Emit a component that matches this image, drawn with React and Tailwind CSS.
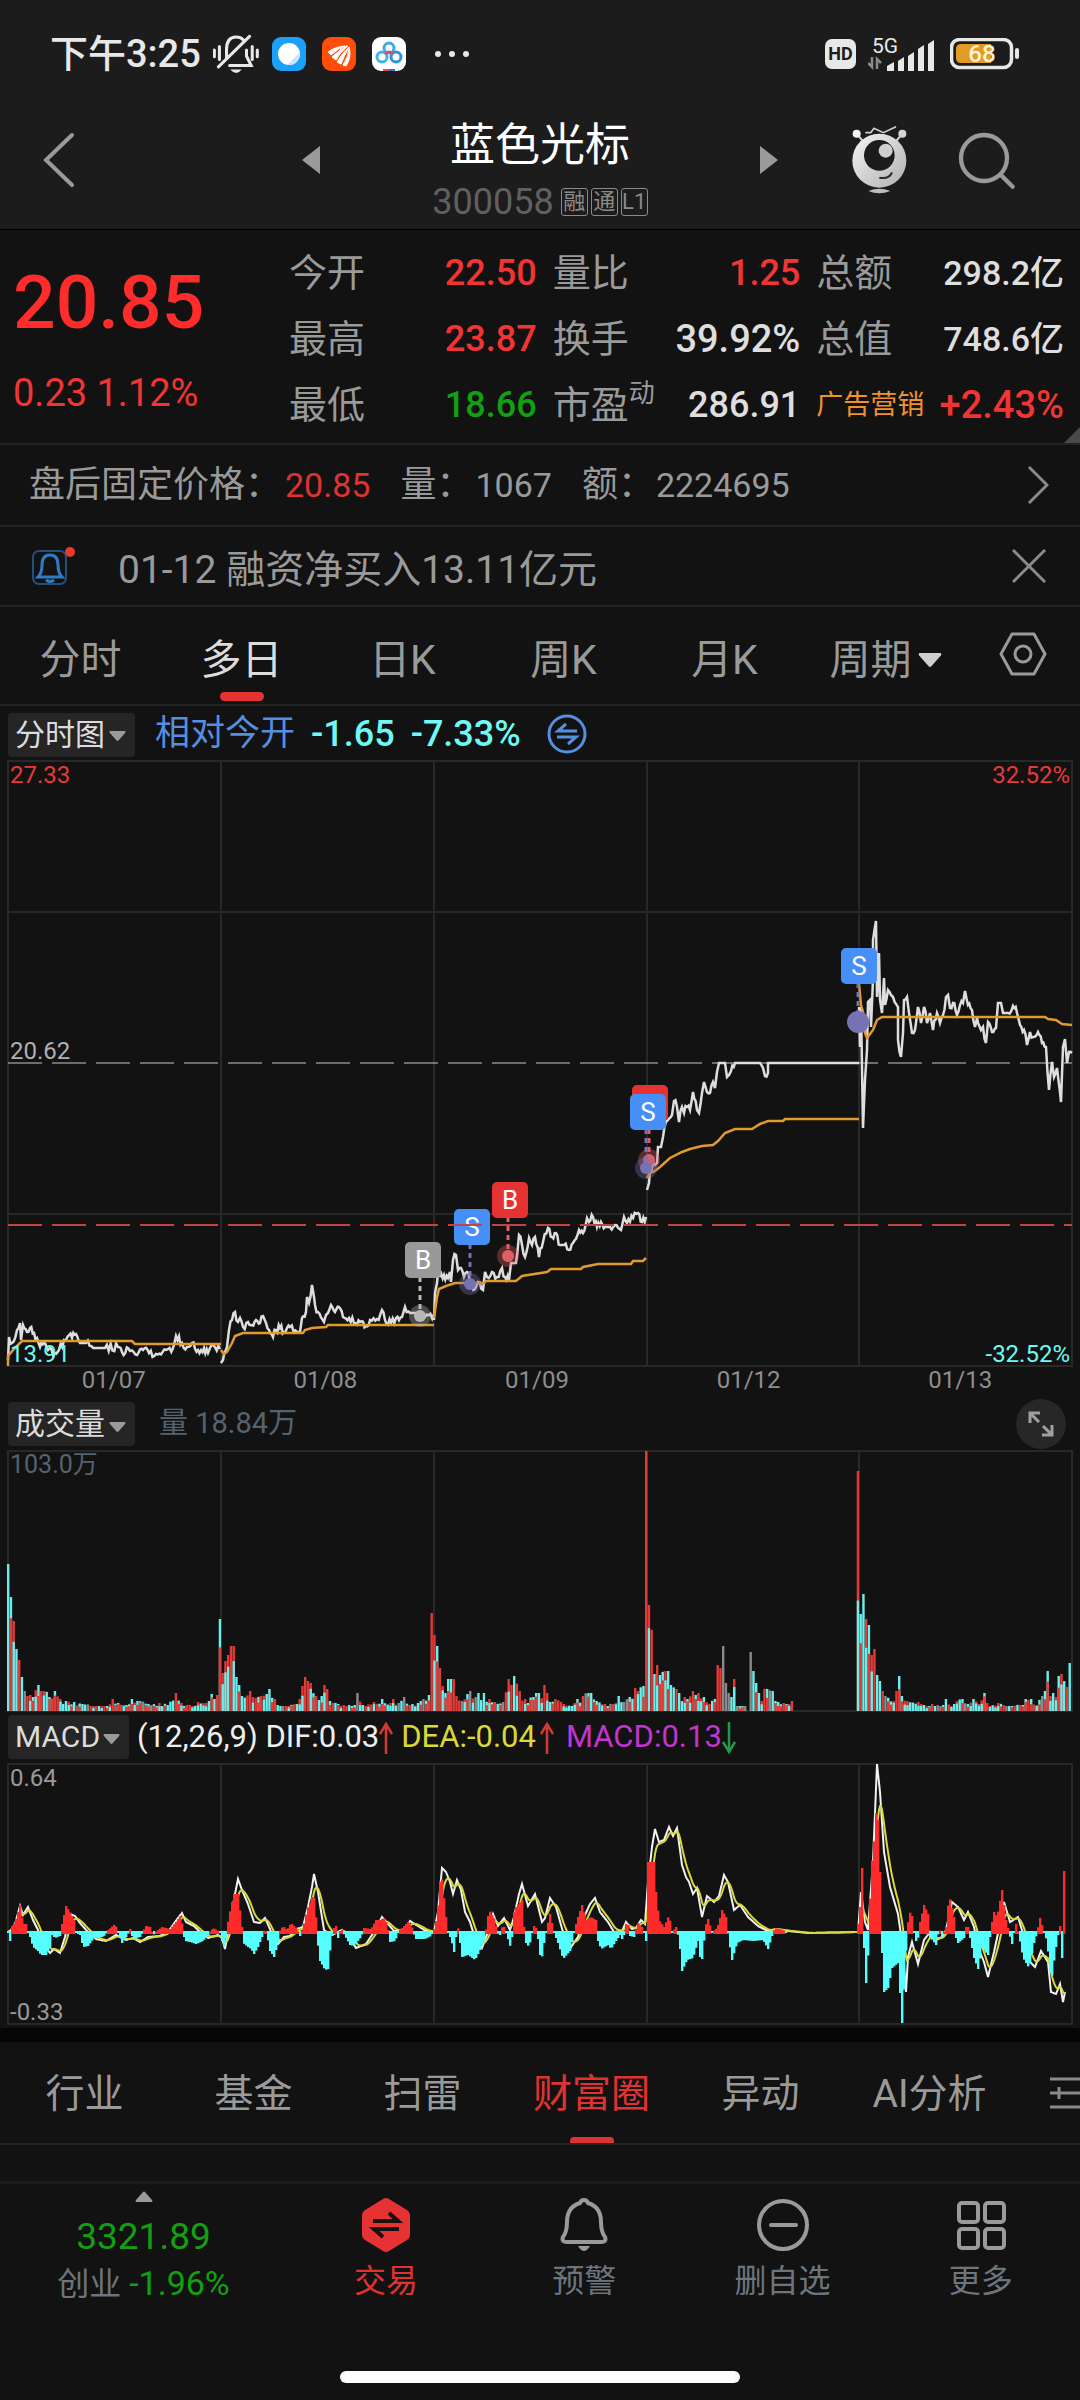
import React, {useState} from 'react';

const DAYS = ['01/07', '01/08', '01/09', '01/12', '01/13'];

const RED = '#e53935';

// each string is one trading day: "x,y x,y ..." in chart units
const PRICE_LINES = [
    '0,599 1,576 4,582 9,569 12,562 13,579 15,564 19,571 22,567 26,572 29,577 32,586 36,582 40,589 47,592 51,589 56,579 61,574 64,577 68,573 72,582 78,582 87,587 97,587 110,586 114,591 122,590 129,594 135,589 141,592 148,593 158,589 165,587 168,575 174,582 179,586 184,582 190,589 196,587 200,592 202,587 212,588',
    '213,602 215,599 219,586 221,569 224,559 227,551 230,561 232,557 235,566 240,561 244,564 248,559 252,562 255,555 258,562 261,569 265,576 268,569 272,567 276,571 282,566 289,571 292,571 294,557 298,551 299,536 301,542 304,524 306,536 307,544 310,551 316,561 318,554 320,552 323,544 327,551 331,546 335,556 341,557 346,562 352,561 358,565 362,559 369,558 374,549 377,559 383,562 388,557 394,556 397,546 402,552 409,552 417,556 426,553',
    '426,559 427,532 429,522 431,501 432,516 436,514 440,517 442,511 443,521 445,499 448,494 450,509 453,507 456,516 459,511 462,521 467,528 470,521 475,529 477,511 479,516 484,511 489,516 494,507 497,516 501,519 503,502 508,502 511,474 514,484 517,496 521,477 524,484 527,476 531,496 535,481 540,467 544,476 548,472 552,484 556,484 561,489 565,482 571,469 575,472 579,457 581,461 585,456 589,466 593,461 597,466 602,466 607,464 613,469 616,456 619,462 625,457 630,452 634,461 638,456',
    '639,429 641,422 642,409 645,402 647,404 649,402 650,386 653,386 655,376 658,361 660,359 664,354 666,340 669,346 671,361 674,346 676,352 679,346 682,349 685,331 689,349 691,352 694,332 696,321 699,331 702,332 705,321 707,327 709,311 711,302 717,302 719,316 721,314 723,310 727,302 752,302 755,307 757,315 760,312 760,302 851,302',
    '851,246 852,286 853,246 855,367 857,319 859,289 860,241 862,239 863,266 865,219 865,179 868,160 869,236 871,192 872,239 874,252 876,217 877,244 880,229 883,234 885,236 890,246 890,279 893,296 895,272 896,239 899,236 901,252 904,272 907,269 910,246 913,262 916,246 919,262 922,252 925,269 929,252 932,262 935,254 938,236 940,234 942,247 945,242 949,254 952,244 955,242 957,230 960,244 964,249 967,266 969,257 973,269 975,266 978,282 980,261 984,271 988,267 990,242 993,242 995,252 1000,252 1005,245 1009,252 1012,264 1016,269 1019,284 1022,271 1025,276 1030,271 1034,282 1038,286 1041,329 1044,301 1046,316 1049,307 1053,341 1055,286 1057,278 1059,302 1061,291 1064,292',
];

const AVG_LINES = [
    '0,605 0,595 6,588 12,582 14,580 124,580 127,583 213,583',
    '213,589 216,593 219,591 224,582 227,575 235,572 295,572 297,569 304,567 318,566 320,564 426,564',
    '426,557 429,536 431,528 438,525 447,522 476,522 478,520 508,520 514,515 539,511 543,508 573,508 575,506 590,503 623,503 625,500 635,500 638,497',
    '639,417 642,412 647,410 652,406 662,397 674,391 682,388 694,385 705,384 710,380 717,372 727,368 744,368 752,363 760,360 775,360 777,358 851,358',
    '851,222 853,244 855,251 857,272 859,277 865,269 869,259 874,256 1037,256 1040,258 1048,259 1054,263 1064,264',
];

// "x,height[,colour]" with r = up, c = down, g = flat
const VOLUME = '0,147,c 3,114,c 5,90,r 8,62,c 11,51,r 14,34,c 16,20 20,15 25,14 30,26,c 33,20 36,20 42,14 47,20,c 52,12 58,10 65,9 75,7 85,5 100,5 104,12,r 110,8 118,6 125,12,c 130,10 140,7 150,8 160,6 168,18,r 172,8 180,6 190,9 200,10 204,17 208,16 212,92,c 215,38,r 217,50,r 219,56,r 223,65,r 226,65,r 228,34,c 231,26,c 235,15 242,20 246,14 252,15 258,17 262,22,c 266,12 270,6 280,5 288,7 293,25,r 297,34,r 300,30,r 303,28,r 307,15 315,14 317,26,r 320,22,r 322,10 330,7 340,6 347,6 350,18,g 354,6 366,9 374,12 382,8 386,12 390,8 397,14 402,6 410,8 415,12 420,16 423,22 424,98,r 426,76,r 429,65,c 432,43,r 435,25,r 438,18 440,32,c 443,32,c 446,32,r 449,15 455,10 462,20 468,14 471,18 476,18 480,12 488,9 495,9 500,32,r 503,26,r 507,35,c 511,20 516,12 525,14 528,18 532,18 536,26,r 539,18 542,9 548,12 556,7 566,8 570,12 576,15 580,18,c 584,18,c 588,10 596,7 606,7 611,15 616,9 622,14 627,23 631,20 635,25 638,260,r 641,106,r 643,81,r 646,37,c 649,46,r 652,36 656,36 658,40 661,40,c 663,26 668,22 672,18 676,14 680,12 685,20,r 690,18 695,14 700,7 706,12 710,46,r 712,43,r 715,65,g 718,28,g 720,18 724,14 726,32,r 728,4,g 738,4,g 740,0 742,0 743,59,g 745,40,c 748,28,c 751,18 755,15 757,22,r 759,22 764,20 766,10 775,8 783,10 785,0 848,0 850,240,r 852,97,c 855,117,c 858,92,r 861,86,c 863,56,r 866,62,r 869,36 872,30 875,20 878,15 885,10 889,20 891,35,c 893,15 900,10 910,9 915,6 925,7 935,6 938,12 945,7 954,12 960,7 965,12 972,7 976,18,c 980,8 990,8 1000,5 1012,6 1018,12 1023,12 1028,6 1033,15 1037,20 1039,40,c 1042,15 1045,18 1048,14 1050,35,c 1053,37,r 1056,30,c 1058,24,r 1061,48,c';

const HISTOGRAM = '0,0 2,-8 3,5 7,10 12,27 15,8 18,8 20,0 22,-4 25,-14 30,-18 33,-22 38,-22 42,-14 44,-2 47,-5 52,-3 54,8 58,26 63,18 67,10 68,0 72,-2 75,-14 80,-13 86,-5 95,-4 100,2 107,8 110,0 114,-10 118,-4 122,3 125,-6 132,-4 138,6 142,5 145,-2 150,2 154,5 162,3 168,10 173,17 175,0 177,-8 182,-9 188,-11 195,-8 200,-2 205,4 212,0 214,-8 217,-16 219,5 223,26 226,38 230,38 234,5 235,-10 240,-14 243,-16 246,-21 250,-14 254,-4 257,4 259,-2 262,-18 266,-24 270,-10 271,0 275,6 279,2 283,9 288,4 292,-3 295,4 299,22 304,35 307,34 309,-5 312,-28 317,-37 320,-36 323,-8 325,3 328,6 330,-5 333,4 337,-3 342,-12 346,-13 353,-4 356,4 363,3 368,12 372,12 377,14 380,2 382,-9 387,-8 390,0 400,10 405,3 407,-6 417,-6 423,-3 426,3 429,15 433,62 438,15 440,0 443,-6 446,-19 448,-4 449,10 451,-3 454,-24 460,-22 467,-27 473,-15 477,-5 479,10 481,22 487,12 489,0 492,-2 495,8 499,-3 503,-16 506,20 508,25 514,32 516,5 518,-10 521,-14 524,0 527,9 530,-6 533,-30 536,-10 539,5 542,18 546,0 550,-10 555,-26 562,-18 566,0 569,12 574,27 578,12 583,15 588,12 590,-8 593,-16 600,-12 603,-16 608,-8 612,-2 615,-8 617,4 619,12 622,-3 626,-4 630,9 635,4 638,-8 639,5 640,70 646,70 648,40 651,12 656,5 661,17 664,0 668,5 671,-5 674,-38 679,-27 685,-25 690,-8 693,-32 695,-20 697,5 700,13 704,0 709,4 711,10 714,22 718,15 721,-8 724,-27 729,-10 735,-7 745,-8 755,-7 760,-16 764,-3 767,4 775,2 778,0 849,0 852,25 854,64 855,20 857,-50 859,-50 861,5 863,62 867,100 869,138 872,60 874,-20 875,-60 880,-55 884,-35 890,-30 894,-90 897,-40 899,5 903,24 906,0 909,-12 912,10 916,27 920,18 922,-4 928,-12 931,4 934,-4 938,5 941,37 946,15 948,-5 950,-10 956,-5 959,10 962,-5 966,-25 970,-36 974,-15 980,-22 983,5 986,20 989,15 994,42 998,12 1001,0 1004,-11 1006,0 1008,8 1011,-3 1015,-25 1021,-35 1026,-10 1029,0 1032,14 1036,0 1039,-8 1043,-50 1047,-20 1050,-2 1052,6 1054,-25 1055,61 1057,61 1058,0';

const DIF = '0,0 3,2 7,8 12,26 15,17 20,25 25,12 30,2 34,-10 42,-21 46,-17 52,-21 57,-5 62,18 67,16 72,9 80,0 88,-7 98,-9 108,-3 118,-8 125,-6 132,-10 140,-5 152,-4 160,0 170,14 174,19 178,10 186,6 192,0 200,-6 210,-3 214,-6 217,-17 222,10 227,38 230,53 234,42 240,28 246,10 252,9 257,14 262,3 266,-8 270,-12 276,-5 282,-4 288,3 295,5 300,25 304,45 306,58 310,40 316,2 324,-3 334,2 340,-3 348,-16 358,-12 366,0 374,15 380,8 386,1 396,1 402,11 410,6 418,1 426,0 430,20 434,64 438,60 442,50 445,38 449,52 453,42 457,20 462,10 467,-6 474,-16 480,0 485,18 490,6 496,14 502,2 506,15 511,38 514,48 520,26 527,38 532,18 534,10 537,14 542,34 548,25 555,0 563,-15 570,-5 576,15 582,28 587,34 592,20 600,10 606,0 614,1 618,10 624,3 628,4 633,12 637,8 640,50 644,85 647,103 651,90 656,92 661,105 665,96 669,104 674,67 678,55 681,50 685,38 689,44 694,15 699,36 706,30 711,36 716,57 720,50 726,22 732,27 740,15 750,6 760,1 768,3 780,1 800,-1 850,0 853,40 857,10 860,2 865,70 869,168 872,140 876,80 882,45 890,18 894,-10 898,-60 900,-25 904,-10 910,-32 916,-8 922,0 928,-8 934,-5 938,2 944,30 950,25 956,12 960,20 966,5 970,-15 976,-30 980,-45 986,-20 992,8 996,30 1002,10 1010,15 1016,-5 1022,-30 1027,-35 1033,-19 1040,-30 1043,-60 1048,-62 1052,-52 1055,-70 1057,-60';

const parse = (text) => text.split(' ').map((item) => {
    const [x, y, color] = item.split(',');
    return {x: Number(x), y: Number(y), color};
});

const noise = (n) => {
    const v = Math.sin(n * 127.1 + 11.7) * 43758.5453;
    return v - Math.floor(v);
};

const valueAt = (points, x) => {
    for (let i = 1; i < points.length; i++) {
        if (x <= points[i].x) {
            const a = points[i - 1];
            const b = points[i];
            return b.x === a.x ? b.y : a.y + (b.y - a.y) * (x - a.x) / (b.x - a.x);
        }
    }
    return points[points.length - 1].y;
};

// minute-level jitter between the stored ticks
const jitter = (text) => {
    const points = parse(text);
    const out = [];
    points.forEach((p, i) => {
        out.push(`${p.x},${p.y}`);
        const next = points[i + 1];
        if (next && next.x - p.x > 2 && next.x - p.x < 20 && p.y !== next.y) {
            const count = Math.floor((next.x - p.x) / 2);
            for (let k = 1; k <= count; k++) {
                const t = k / (count + 1);
                const y = p.y + (next.y - p.y) * t + (noise(p.x + k * 3) - 0.5) * 8;
                out.push(`${(p.x + (next.x - p.x) * t).toFixed(1)},${y.toFixed(1)}`);
            }
        }
    });
    return out.join(' ');
};

const buildVolume = () => {
    const keys = parse(VOLUME);
    const fills = {r: RED, c: '#6af0ec', g: '#8a8a8a'};
    const bars = [];
    for (let i = 0; i < 387; i++) {
        const x = i * 2.75;
        const near = keys.filter((k) => Math.abs(k.x - x) <= 1.4).sort((a, b) => b.y - a.y)[0];
        let h = near ? near.y : valueAt(keys, x) * (0.6 + noise(i) * 0.5);
        if (h < 1) continue;
        h = Math.max(h, 5);
        const n = noise(i * 1.7 + 3);
        const color = (near && near.color) || (n < 0.42 ? 'r' : n < 0.9 ? 'c' : 'g');
        bars.push({x, h, fill: fills[color]});
        if (noise(i + 40) > 0.45 && color !== 'g') {
            const k = h > 200 ? 0.46 : 0.55 + noise(i + 9) * 0.3;
            bars.push({x, h: h * k, fill: fills[color === 'r' ? 'c' : 'r']});
        }
    }
    return bars;
};

const buildMacd = () => {
    const dif = parse(DIF);
    const hist = parse(HISTOGRAM);
    const white = [];
    const yellow = [];
    const bars = [];
    let dea = 0;
    for (let x = 0; x <= 1057; x++) {
        const v = valueAt(dif, x);
        dea = dea + (v - dea) * 0.22;
        white.push(`${x},${(168 - v).toFixed(1)}`);
        yellow.push(`${x},${(168 - dea).toFixed(1)}`);
        if (x % 2 === 0 && (x < 780 || x > 848)) bars.push({x, v: valueAt(hist, x)});
    }
    return {white: white.join(' '), yellow: yellow.join(' '), bars};
};

const volumeBars = buildVolume();
const macd = buildMacd();

function Grid({height, rows = []}) {
    return (
        <g stroke="#282828" strokeWidth="2" fill="none">
            <rect x="0" y="0" width="1064" height={height}/>
            {[213, 426, 639, 851].map((x) => <line key={x} x1={x} x2={x} y1="0" y2={height}/>)}
            {rows.map((y) => <line key={y} x1="0" x2="1064" y1={y} y2={y}/>)}
        </g>
    );
}

function Flag({x, y, letter, color, dot, dotColor, solid}) {
    return (
        <g>
            <line x1={dot[0]} x2={dot[0]} y1={y + 35} y2={dot[1]} stroke={dotColor} strokeWidth="3" strokeDasharray="5 4"/>
            <circle cx={dot[0]} cy={dot[1]} r="11" fill={dotColor} opacity={solid ? 1 : 0.35}/>
            <circle cx={dot[0]} cy={dot[1]} r="6" fill={dotColor}/>
            <rect x={x} y={y} width="36" height="36" rx="5" fill={color}/>
            {letter && <text x={x + 18} y={y + 27} textAnchor="middle" fontSize="26" fill="#fff">{letter}</text>}
        </g>
    );
}

function PriceChart() {
    return (
        <svg viewBox="0 0 1064 605" className="block w-full overflow-visible">
            <Grid height="605" rows={[151, 453]}/>
            <line x1="0" x2="1064" y1="302" y2="302" stroke="#c8c8c8" strokeWidth="1" strokeDasharray="34 10"/>
            {PRICE_LINES.map((line) => (
                <polyline key={line} points={jitter(line)} fill="none" stroke="#dedede" strokeWidth="2.500"/>
            ))}
            {AVG_LINES.map((line) => (
                <polyline key={line} points={line} fill="none" stroke="#e09a2f" strokeWidth="2.500"/>
            ))}
            <Flag x={397} y={481} letter="B" color="#999" dot={[412, 555]} dotColor="#b8b8b8"/>
            <Flag x={446} y={448} letter="S" color="#458ff7" dot={[462, 523]} dotColor="#7672b4"/>
            <Flag x={484} y={421} letter="B" color="#e63232" dot={[500, 495]} dotColor="#e05f63"/>
            <Flag x={624} y={324} color="#e63232" dot={[641, 399]} dotColor="#e05f63"/>
            <Flag x={622} y={333} letter="S" color="#458ff7" dot={[638, 407]} dotColor="#7672b4"/>
            <Flag x={833} y={187} letter="S" color="#458ff7" dot={[850, 261]} dotColor="#7672b4" solid/>
            <line x1="0" x2="1064" y1="464" y2="464" stroke="#c04444" strokeWidth="2" strokeDasharray="34 10"/>
        </svg>
    );
}

function VolumeChart() {
    return (
        <svg viewBox="0 0 1064 260" className="block w-full overflow-visible">
            <Grid height="260"/>
            {volumeBars.map((bar, i) => (
                <rect key={i} x={bar.x - 1} y={260 - bar.h} width="2.400" height={bar.h} fill={bar.fill}/>
            ))}
        </svg>
    );
}

function MacdChart() {
    return (
        <svg viewBox="0 0 1064 260" className="block w-full overflow-visible">
            <Grid height="260"/>
            <polyline points={macd.white} fill="none" stroke="#f2f2f2" strokeWidth="2"/>
            <polyline points={macd.yellow} fill="none" stroke="#d9d93a" strokeWidth="2"/>
            {macd.bars.map(({x, v}) => (
                <rect
                    key={x}
                    x={x - 1}
                    y={v > 0 ? 168 - v : 167}
                    width="2.4"
                    height={Math.abs(v) + 2}
                    fill={v > 0 ? '#ff2a2a' : '#55ffff'}
                />
            ))}
        </svg>
    );
}

function Down({className}) {
    return (
        <svg viewBox="0 0 18 11" className={className} fill="currentColor">
            <path d="M1 0h16q1 1 0 2l-7 8q-1 1-2 0L1 2q-1-1 0-2z"/>
        </svg>
    );
}

function Picker({label, options, className}) {
    return (
        <div className="relative">
            <select
                aria-label={label}
                className={`h-11 appearance-none rounded bg-[#252525] pl-[7px] text-[30px] leading-[44px] text-[#dcdcdc] outline-none ${className}`}
            >
                {options.map((option) => <option key={option}>{option}</option>)}
            </select>
            <Down className="pointer-events-none absolute right-[9px] top-5 w-[17px] text-[#9a9a9a]"/>
        </div>
    );
}

function StatusBar() {
    return (
        <div className="flex h-[90px] items-center pt-[17px] pl-[50px] pr-[60px] text-[#e8e8e8]">
            <span className="text-[38px] font-medium leading-[40px]">下午3:25</span>
            <svg viewBox="505 45 136 118" className="ml-3 h-10 w-[46px]" fill="none" stroke="currentColor" strokeWidth="9">
                <path d="M545 118V92q0-38 28-38 14 0 21 8M604 92v18l14 28h-64M509 92v20M524 82v38M621 82v38M636 92v20M521 142l92-90" strokeLinecap="round"/>
                <path d="M556 150h34q-16 20-34 0z" fill="currentColor" stroke="none"/>
            </svg>
            <svg viewBox="0 0 34 34" className="ml-[13px] w-[34px]">
                <rect width="34" height="34" rx="9" fill="#1ba0fb"/>
                <circle cx="17" cy="17" r="11" fill="#fff"/>
                <path d="M28 15L15 28q12 1 13-13z" fill="#cfe4fc"/>
            </svg>
            <svg viewBox="0 0 34 34" className="ml-4 w-[34px]">
                <rect width="34" height="34" rx="9" fill="#ff4d0a"/>
                <path d="M6 15q8-6 19-6-9 2-16 9zM10 20q8-8 16-11-9 7-12 14zM15 25q6-10 12-15-5 9-8 17zM21 28q6-9 6-18 3 10-3 19z" fill="#fff" stroke="#fff"/>
            </svg>
            <svg viewBox="0 0 34 34" className="ml-4 w-[34px]" fill="none" strokeWidth="3">
                <rect width="34" height="34" rx="9" fill="#fff"/>
                <circle cx="17" cy="11" r="5" stroke="#3aa9e8"/>
                <circle cx="10" cy="20" r="5" stroke="#3cb4ea"/>
                <circle cx="24" cy="20" r="5" stroke="#2f92dc"/>
                <path d="M13 17q4-4 8 0" stroke="#e8496a"/>
                <path d="M11 33h6" stroke="#e8496a" strokeWidth="2"/>
                <path d="M17 33h6" stroke="#2f6fdc" strokeWidth="2"/>
            </svg>
            <svg viewBox="0 0 36 6" className="ml-[29px] w-9" fill="currentColor">
                <circle cx="3" cy="3" r="3"/>
                <circle cx="17" cy="3" r="3"/>
                <circle cx="31" cy="3" r="3"/>
            </svg>
            <span className="ml-auto flex h-[30px] w-[31px] items-center justify-center rounded-[7px] bg-[#e8e8e8] text-[18px] font-bold text-[#1c1c1c]">HD</span>
            <svg viewBox="0 -8 68 50" className="ml-3 w-[68px]" fill="currentColor">
                <text x="4" y="16" fontSize="21">5G</text>
                <path d="M4 20v10l-4-4M9 32V22l4 4" fill="none" stroke="#8a8a8a" strokeWidth="2.5"/>
                <path d="M19 29l7-4v9h-7zM30 24l6-4v14h-6zM40 19l6-4v19h-6zM50 12l6-4v26h-6zM60 7l6-4v31h-6z"/>
            </svg>
            <svg viewBox="0 0 70 32" className="ml-[14px] w-[70px]">
                <rect x="1.500" y="1.500" width="60" height="28" rx="8" fill="none" stroke="#e8e8e8" strokeWidth="3.500"/>
                <path d="M11 6h30v19H11q-5 0-5-5v-9q0-5 5-5z" fill="#e09c24"/>
                <rect x="65" y="10" width="4" height="11" rx="2" fill="#e8e8e8"/>
                <text x="32" y="24" fontSize="24" fontWeight="500" textAnchor="middle" fill="#fff3da">68</text>
            </svg>
        </div>
    );
}

function TitleBar() {
    return (
        <div className="flex h-[140px] items-center border-b border-black">
            <div className="w-[230px] pl-[42px]">
                <button aria-label="返回" className="block">
                    <svg viewBox="0 0 34 56" className="w-[34px]" fill="none" stroke="#9a9a9a" strokeWidth="4" strokeLinecap="round">
                        <path d="M30 3L4 28l26 25"/>
                    </svg>
                </button>
            </div>
            <div className="flex flex-1 items-center justify-between px-[72px]">
                <button aria-label="上一只">
                    <svg viewBox="0 0 18 28" className="w-[18px]" fill="#9a9a9a"><path d="M18 0v28L0 14z"/></svg>
                </button>
                <div className="flex flex-col items-center pt-5">
                    <h1 className="text-[45px] leading-[56px] text-white">蓝色光标</h1>
                    <div className="flex items-center gap-[3px] pt-2">
                        <span className="pr-1 text-[36px] leading-10 text-[#606060]">300058</span>
                        {['融', '通', 'L1'].map((tag) => (
                            <span key={tag} className="flex h-7 w-[27px] items-center justify-center rounded-[3px] border border-[#8a8a8a] text-[22px] leading-6 text-[#8a8a8a]">{tag}</span>
                        ))}
                    </div>
                </div>
                <button aria-label="下一只">
                    <svg viewBox="0 0 18 28" className="w-[18px]" fill="#9a9a9a"><path d="M0 0v28l18-14z"/></svg>
                </button>
            </div>
            <div className="flex w-[230px] items-center gap-[47px]">
                <button aria-label="智能助手">
                    <svg viewBox="120 320 180 210" className="w-[60px]">
                        <defs>
                            <linearGradient id="body" x1="0" y1="0" x2="1" y2="1">
                                <stop offset="0" stopColor="#f4f4f4"/>
                                <stop offset="1" stopColor="#b0b0b0"/>
                            </linearGradient>
                        </defs>
                        <path d="M140 346l20 24M277 346l-20 24" stroke="#d8d8d8" strokeWidth="6"/>
                        <circle cx="140" cy="346" r="12" fill="#f4f4f4"/>
                        <circle cx="277" cy="346" r="12" fill="#d4d4d4"/>
                        <path d="M166 343h16l10-13 28 13 38-18" fill="none" stroke="#d0d0d0" strokeWidth="5"/>
                        <circle cx="208" cy="427" r="81" fill="url(#body)"/>
                        <circle cx="208" cy="411" r="46" fill="#1c1c1c"/>
                        <circle cx="227" cy="397" r="21" fill="#cfcfcf"/>
                        <path d="M208 478q30 5 38-16" fill="none" stroke="#2a2a2a" strokeWidth="6"/>
                        <path d="M175 518q33-14 66 0-33 14-66 0z" fill="#bdbdbd"/>
                    </svg>
                </button>
                <button aria-label="搜索">
                    <svg viewBox="440 332 180 180" className="w-[60px]" fill="none" stroke="#9a9a9a" strokeWidth="13" strokeLinecap="round">
                        <circle cx="521" cy="416" r="69"/>
                        <path d="M571 466l36 36"/>
                    </svg>
                </button>
            </div>
        </div>
    );
}

const stats = [
    {label: '今开', value: '22.50', color: 'text-[#f23533]'},
    {label: '量比', value: '1.25', color: 'text-[#f23533]'},
    {label: '总额', value: '298.2亿', color: 'text-[#dedede]', size: 'text-[34px]'},
    {label: '最高', value: '23.87', color: 'text-[#f23533]'},
    {label: '换手', value: '39.92%', color: 'text-[#dedede]', size: 'text-[38px]'},
    {label: '总值', value: '748.6亿', color: 'text-[#dedede]', size: 'text-[34px]'},
    {label: '最低', value: '18.66', color: 'text-[#12a012]'},
    {label: '市盈', sup: '动', value: '286.91', color: 'text-[#dedede]'},
    {label: '广告营销', value: '+2.43%', color: 'text-[#f23533]', size: 'text-[38px]', sector: true},
];

function Quote() {
    return (
        <section className="relative grid grid-cols-[260px_1fr] gap-4 border-b-2 border-[#232323] pb-[5px] pl-[13px] pr-4 pt-[10px]">
            <div>
                <p className="pt-6 text-[75px] font-medium leading-[76px] text-[#ff2c2c]">20.85</p>
                <p className="pt-[33px] text-[38px] leading-[40px] text-[#f23533]">0.23 1.12%</p>
            </div>
            <dl className="grid grid-cols-3 gap-x-4">
                {stats.map((item) => (
                    <div key={item.label} className="flex h-[66px] items-center justify-between whitespace-nowrap">
                        <dt className={item.sector ? 'text-[27px] text-[#f0922e]' : 'text-[38px] text-[#9a9a9a]'}>
                            {item.label}
                            {item.sup && <sup className="-top-4 text-[26px]">{item.sup}</sup>}
                        </dt>
                        <dd className={`font-medium ${item.size || 'text-[36px]'} ${item.color}`}>{item.value}</dd>
                    </div>
                ))}
            </dl>
            <svg viewBox="0 0 16 16" className="absolute bottom-0 right-0 w-4" fill="#4a4a4a"><path d="M16 0v16H0z"/></svg>
        </section>
    );
}

function Notices() {
    return (
        <>
            <a href="#after-hours" className="flex h-[82px] items-center border-b-2 border-[#232323] pl-[29px] pr-[31px] text-[36px] text-[#9a9a9a]">
                <span>盘后固定价格：</span>
                <span className="ml-1 text-[34px] text-[#e03230]">20.85</span>
                <span className="ml-[30px]">量：</span>
                <span className="ml-[3px] text-[34px]">1067</span>
                <span className="ml-[30px]">额：</span>
                <span className="ml-0.5 text-[34px]">2224695</span>
                <svg viewBox="0 0 22 40" className="ml-auto w-[22px]" fill="none" stroke="#8a8a8a" strokeWidth="3">
                    <path d="M2 2l18 18L2 38"/>
                </svg>
            </a>
            <div className="flex h-20 items-center border-b-2 border-[#232323] pl-8 pr-[34px] text-[#9a9a9a]">
                <svg viewBox="0 0 44 42" className="w-11" fill="none" stroke="#2f7cc4" strokeWidth="3">
                    <rect x="1" y="6" width="33" height="33" rx="6" stroke="#24507c" strokeWidth="2"/>
                    <path d="M6 32q4-4 4-12 0-10 8-10t8 10q0 8 4 12z"/>
                    <path d="M14 35q4 3 8 0"/>
                    <circle cx="38" cy="7" r="5" fill="#e8392f" stroke="none"/>
                </svg>
                <p className="ml-[42px] pt-2 text-[39px]">01-12 融资净买入13.11亿元</p>
                <button aria-label="关闭" className="ml-auto">
                    <svg viewBox="0 0 34 34" className="w-[34px]" fill="none" stroke="#8a8a8a" strokeWidth="3"><path d="M1 1l32 32M33 1L1 33"/></svg>
                </button>
            </div>
        </>
    );
}

function PeriodTabs() {
    const [period, setPeriod] = useState('多日');

    return (
        <nav className="flex h-[99px] border-b-2 border-[#232323] text-[41px]">
            {['分时', '多日', '日K', '周K', '月K', '周期'].map((name) => (
                <button
                    key={name}
                    onClick={() => setPeriod(name)}
                    className={`flex flex-1 flex-col items-center pt-[23px] ${period === name ? 'text-[#dcdcdc]' : 'text-[#9a9a9a]'}`}
                >
                    <span className="flex items-center leading-[60px]">
                        {name}
                        {name === '周期' && <Down className="ml-1.5 w-6 text-[#cfcfcf]"/>}
                    </span>
                    {period === name && <span className="mt-0.5 h-[9px] w-11 rounded-full bg-[#e63232]"/>}
                </button>
            ))}
            <button aria-label="设置" className="flex w-[114px] items-start justify-center pt-[25px]">
                <svg viewBox="0 0 48 44" className="w-12" fill="none" stroke="#9a9a9a" strokeWidth="3">
                    <path d="M13 2h22l11 20-11 20H13L2 22z" strokeLinejoin="round"/>
                    <circle cx="24" cy="22" r="8"/>
                </svg>
            </button>
        </nav>
    );
}

function Arrow({up}) {
    return (
        <svg viewBox="0 0 14 32" className="mr-2 w-[14px]" fill="none" stroke={up ? '#d33a35' : '#239a48'} strokeWidth="2.500">
            <path d={up ? 'M7 32V2M1 12L7 2l6 10' : 'M7 0v30M1 20l6 10 6-10'}/>
        </svg>
    );
}

function Charts() {
    return (
        <section className="px-2 pb-1">
            <div className="flex h-[55px] items-center text-[36px] leading-[44px]">
                <Picker label="主图" options={['分时图', 'K线图']} className="w-[127px]"/>
                <span className="ml-5 text-[35px] text-[#568ee0]">相对今开</span>
                <span className="ml-4 font-medium text-[#6ff9f4]">-1.65</span>
                <span className="ml-4 font-medium text-[#6ff9f4]">-7.33%</span>
                <button aria-label="切换基准" className="ml-[26px]">
                    <svg viewBox="0 0 40 40" className="w-10" fill="none" stroke="#568ee0" strokeWidth="3">
                        <circle cx="20" cy="20" r="18"/>
                        <path d="M30 17H11l8-7M10 23h19l-8 7"/>
                    </svg>
                </button>
            </div>
            <div className="relative text-[24px] leading-6">
                <PriceChart/>
                <span className="absolute left-0.5 top-0.5 text-[#e8393a]">27.33</span>
                <span className="absolute right-0.5 top-0.5 text-[#e8393a]">32.52%</span>
                <span className="absolute left-0.5 top-[46%] text-[#b0b0b0]">20.62</span>
                <span className="absolute bottom-0 left-0.5 text-[#6ff9f4]">13.91</span>
                <span className="absolute bottom-0 right-0.5 text-[#6ff9f4]">-32.52%</span>
            </div>
            <div className="grid h-[30px] grid-cols-5 pr-1.5 text-center text-[24px] leading-[28px] text-[#8e8e8e]">
                {DAYS.map((day) => <span key={day}>{day}</span>)}
            </div>
            <div className="flex h-[55px] items-center">
                <Picker label="成交指标" options={['成交量', '成交额']} className="w-[127px]"/>
                <span className="ml-6 text-[29px] text-[#55636f]">量 18.84万</span>
                <button aria-label="全屏" className="ml-auto mr-1.5 flex h-[50px] w-[50px] items-center justify-center rounded-full bg-[#272727]">
                    <svg viewBox="0 0 26 26" className="w-[26px]" fill="none" stroke="#a0a0a0" strokeWidth="3">
                        <path d="M2 12V2h10M2 2l9 9M24 14v10H14M24 24l-9-9"/>
                    </svg>
                </button>
            </div>
            <div className="relative">
                <VolumeChart/>
                <span className="absolute left-0.5 top-0 text-[25px] leading-[28px] text-[#55636f]">103.0万</span>
            </div>
            <div className="flex h-[53px] items-center whitespace-nowrap text-[31px]">
                <Picker label="副图指标" options={['MACD', 'KDJ', 'RSI']} className="w-[121px]"/>
                <span className="ml-2 text-[#eeeeee]">(12,26,9) DIF:0.03</span>
                <Arrow up/>
                <span className="mr-1 text-[#d9d93a]">DEA:-0.04</span>
                <Arrow up/>
                <span className="ml-1 text-[#c235cf]">MACD:0.13</span>
                <Arrow/>
            </div>
            <div className="relative text-[24px] leading-6 text-[#9a9a9a]">
                <MacdChart/>
                <span className="absolute left-0.5 top-0.5">0.64</span>
                <span className="absolute bottom-0 left-0.5">-0.33</span>
            </div>
        </section>
    );
}

function InfoTabs() {
    const [tab, setTab] = useState('财富圈');

    return (
        <nav className="mb-9 flex h-[103px] overflow-hidden border-b-2 border-[#232323] text-[39px]">
            {['行业', '基金', '扫雷', '财富圈', '异动', 'AI分析'].map((name) => (
                <button
                    key={name}
                    onClick={() => setTab(name)}
                    className={`flex flex-1 flex-col items-center justify-between whitespace-nowrap pt-[22px] ${tab === name ? 'text-[#e03230]' : 'text-[#9a9a9a]'}`}
                >
                    <span className="leading-[60px]">{name}</span>
                    {tab === name && <span className="h-1.5 w-11 rounded-t-sm bg-[#e03230]"/>}
                </button>
            ))}
            <button aria-label="栏目管理" className="w-[66px] overflow-hidden pl-9">
                <svg viewBox="0 0 30 34" className="w-[30px]" fill="none" stroke="#8a8a8a" strokeWidth="3">
                    <path d="M0 3h30M0 31h30M0 17h30M9 11v12"/>
                </svg>
            </button>
        </nav>
    );
}

function BottomBar() {
    return (
        <footer className="flex h-[190px] border-t-[3px] border-[#1c1c1c] text-[32px] leading-10 text-[#6d757c]">
            <a href="#index" className="flex w-[287px] flex-col items-center pt-[7px]">
                <svg viewBox="0 0 18 11" className="w-[18px]" fill="#9a9a9a"><path d="M1 11h16q1-1 0-2l-7-8q-1-1-2 0L1 9q-1 1 0 2z"/></svg>
                <span className="pt-[13px] text-[37px] leading-[44px] text-[#12a012]">3321.89</span>
                <span className="pt-1">创业 <span className="text-[34px] text-[#12a012]">-1.96%</span></span>
            </a>
            <a href="#trade" className="flex flex-1 flex-col items-center pt-[13px] text-[#e03230]">
                <svg viewBox="0 0 50 56" className="w-[50px]">
                    <path d="M22 2q3-2 6 0l18 11q3 2 3 5v20q0 3-3 5L28 54q-3 2-6 0L4 43q-3-2-3-5V18q0-3 3-5z" fill="#e63232"/>
                    <path d="M12 24h25l-9-8M38 32H13l9 8" fill="none" stroke="#1a1010" strokeWidth="4"/>
                </svg>
                <span className="pt-2">交易</span>
            </a>
            <a href="#alert" className="flex flex-1 flex-col items-center pt-[13px]">
                <svg viewBox="0 0 50 56" className="w-[50px]" fill="none" stroke="#9a9a9a" strokeWidth="4">
                    <path d="M25 3q-3 0-4 3-13 4-13 19 0 10-4 15-2 5 4 5h34q6 0 4-5-4-5-4-15 0-15-13-19-1-3-4-3z"/>
                    <path d="M19 49h12q-6 10-12 0z" fill="#9a9a9a" stroke="none"/>
                </svg>
                <span className="pt-2">预警</span>
            </a>
            <a href="#remove" className="flex flex-1 flex-col items-center pt-[13px]">
                <svg viewBox="0 0 52 56" className="h-14 w-[52px]" fill="none" stroke="#9a9a9a" strokeWidth="4">
                    <circle cx="26" cy="28" r="24"/>
                    <path d="M14 28h25" strokeLinecap="round"/>
                </svg>
                <span className="pt-2">删自选</span>
            </a>
            <a href="#more" className="flex flex-1 flex-col items-center pt-[13px]">
                <svg viewBox="0 0 50 56" className="w-[50px]" fill="none" stroke="#9a9a9a" strokeWidth="4">
                    <rect x="3" y="6" width="19" height="19" rx="3"/>
                    <rect x="29" y="6" width="19" height="19" rx="3"/>
                    <rect x="3" y="32" width="19" height="19" rx="3"/>
                    <rect x="29" y="32" width="19" height="19" rx="3"/>
                </svg>
                <span className="pt-2">更多</span>
            </a>
        </footer>
    );
}

export default function App() {
    return (
        <div className="min-h-screen bg-[#121212] font-['Roboto','Noto_Sans_CJK_SC',sans-serif]">
            <header className="bg-[#1c1c1c]">
                <StatusBar/>
                <TitleBar/>
            </header>
            <main>
                <Quote/>
                <Notices/>
                <PeriodTabs/>
                <Charts/>
                <div className="h-[14px] bg-[#060606]"/>
                <InfoTabs/>
            </main>
            <BottomBar/>
            <div className="mx-auto h-3 w-[37%] rounded-full bg-white"/>
        </div>
    );
}
